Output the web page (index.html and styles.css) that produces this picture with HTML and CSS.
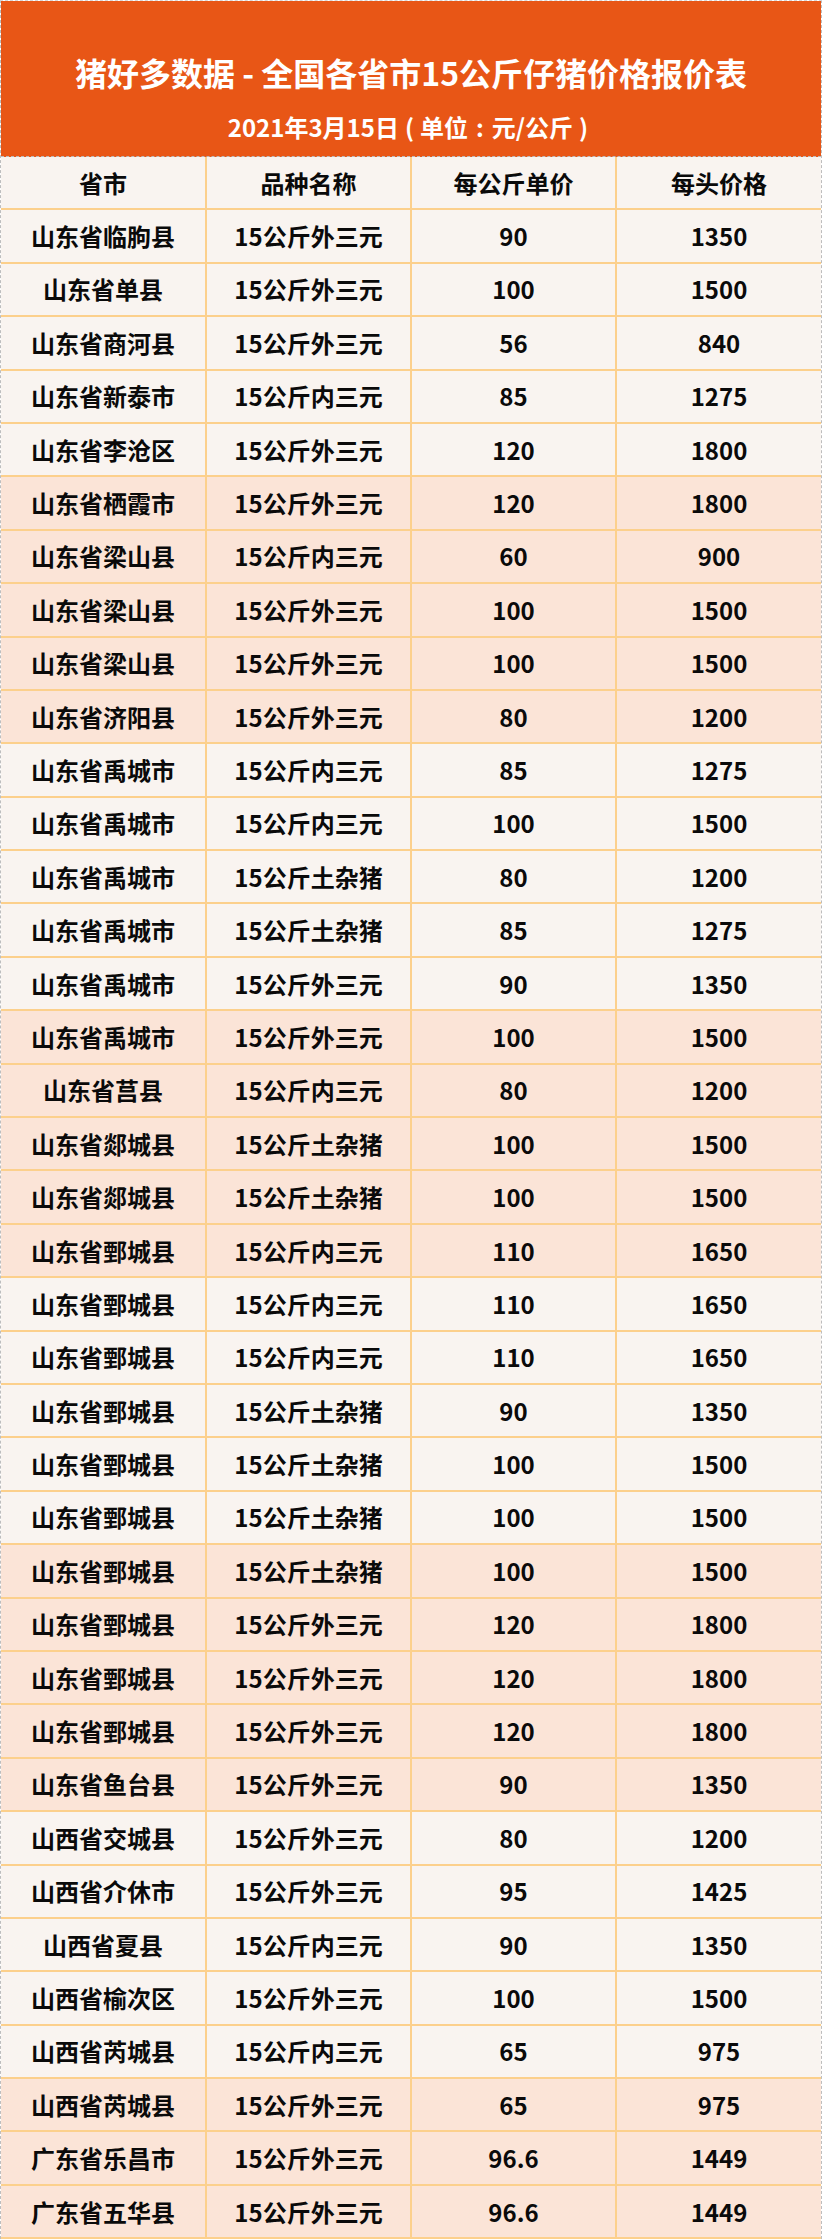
FILE: index.html
```html
<!DOCTYPE html>
<html lang="zh">
<head>
<meta charset="utf-8">
<title>猪好多数据</title>
<link rel="stylesheet" href="styles.css">
</head>
<body>
<div class="sheet">
  <header class="banner">
    <h1 class="title">猪好多数据 - 全国各省市15公斤仔猪价格报价表</h1>
    <p class="subtitle">2021年3月15日<span class="paren">(</span>单位<span class="colon">:</span>元/公斤<span class="paren">)</span></p>
  </header>
  <table class="prices">
    <thead>
      <tr class="light"><th>省市</th><th>品种名称</th><th>每公斤单价</th><th>每头价格</th></tr>
    </thead>
    <tbody>
      <tr class="light"><td>山东省临朐县</td><td>15公斤外三元</td><td>90</td><td>1350</td></tr>
      <tr class="light"><td>山东省单县</td><td>15公斤外三元</td><td>100</td><td>1500</td></tr>
      <tr class="light"><td>山东省商河县</td><td>15公斤外三元</td><td>56</td><td>840</td></tr>
      <tr class="light"><td>山东省新泰市</td><td>15公斤内三元</td><td>85</td><td>1275</td></tr>
      <tr class="light"><td>山东省李沧区</td><td>15公斤外三元</td><td>120</td><td>1800</td></tr>
      <tr class="peach"><td>山东省栖霞市</td><td>15公斤外三元</td><td>120</td><td>1800</td></tr>
      <tr class="peach"><td>山东省梁山县</td><td>15公斤内三元</td><td>60</td><td>900</td></tr>
      <tr class="peach"><td>山东省梁山县</td><td>15公斤外三元</td><td>100</td><td>1500</td></tr>
      <tr class="peach"><td>山东省梁山县</td><td>15公斤外三元</td><td>100</td><td>1500</td></tr>
      <tr class="peach"><td>山东省济阳县</td><td>15公斤外三元</td><td>80</td><td>1200</td></tr>
      <tr class="light"><td>山东省禹城市</td><td>15公斤内三元</td><td>85</td><td>1275</td></tr>
      <tr class="light"><td>山东省禹城市</td><td>15公斤内三元</td><td>100</td><td>1500</td></tr>
      <tr class="light"><td>山东省禹城市</td><td>15公斤土杂猪</td><td>80</td><td>1200</td></tr>
      <tr class="light"><td>山东省禹城市</td><td>15公斤土杂猪</td><td>85</td><td>1275</td></tr>
      <tr class="light"><td>山东省禹城市</td><td>15公斤外三元</td><td>90</td><td>1350</td></tr>
      <tr class="peach"><td>山东省禹城市</td><td>15公斤外三元</td><td>100</td><td>1500</td></tr>
      <tr class="peach"><td>山东省莒县</td><td>15公斤内三元</td><td>80</td><td>1200</td></tr>
      <tr class="peach"><td>山东省郯城县</td><td>15公斤土杂猪</td><td>100</td><td>1500</td></tr>
      <tr class="peach"><td>山东省郯城县</td><td>15公斤土杂猪</td><td>100</td><td>1500</td></tr>
      <tr class="peach"><td>山东省鄄城县</td><td>15公斤内三元</td><td>110</td><td>1650</td></tr>
      <tr class="light"><td>山东省鄄城县</td><td>15公斤内三元</td><td>110</td><td>1650</td></tr>
      <tr class="light"><td>山东省鄄城县</td><td>15公斤内三元</td><td>110</td><td>1650</td></tr>
      <tr class="light"><td>山东省鄄城县</td><td>15公斤土杂猪</td><td>90</td><td>1350</td></tr>
      <tr class="light"><td>山东省鄄城县</td><td>15公斤土杂猪</td><td>100</td><td>1500</td></tr>
      <tr class="light"><td>山东省鄄城县</td><td>15公斤土杂猪</td><td>100</td><td>1500</td></tr>
      <tr class="peach"><td>山东省鄄城县</td><td>15公斤土杂猪</td><td>100</td><td>1500</td></tr>
      <tr class="peach"><td>山东省鄄城县</td><td>15公斤外三元</td><td>120</td><td>1800</td></tr>
      <tr class="peach"><td>山东省鄄城县</td><td>15公斤外三元</td><td>120</td><td>1800</td></tr>
      <tr class="peach"><td>山东省鄄城县</td><td>15公斤外三元</td><td>120</td><td>1800</td></tr>
      <tr class="peach"><td>山东省鱼台县</td><td>15公斤外三元</td><td>90</td><td>1350</td></tr>
      <tr class="light"><td>山西省交城县</td><td>15公斤外三元</td><td>80</td><td>1200</td></tr>
      <tr class="light"><td>山西省介休市</td><td>15公斤外三元</td><td>95</td><td>1425</td></tr>
      <tr class="light"><td>山西省夏县</td><td>15公斤内三元</td><td>90</td><td>1350</td></tr>
      <tr class="light"><td>山西省榆次区</td><td>15公斤外三元</td><td>100</td><td>1500</td></tr>
      <tr class="light"><td>山西省芮城县</td><td>15公斤内三元</td><td>65</td><td>975</td></tr>
      <tr class="peach"><td>山西省芮城县</td><td>15公斤外三元</td><td>65</td><td>975</td></tr>
      <tr class="peach"><td>广东省乐昌市</td><td>15公斤外三元</td><td>96.6</td><td>1449</td></tr>
      <tr class="peach"><td>广东省五华县</td><td>15公斤外三元</td><td>96.6</td><td>1449</td></tr>
    </tbody>
  </table>
</div>
</body>
</html>
```

FILE: styles.css
```css
html, body {
  margin: 0;
  padding: 0;
  background: #ffffff;
}

body {
  font-family: "Noto Sans CJK SC", "Noto Sans", sans-serif;
  color: #0a0a0a;
}

.sheet {
  width: 822px;
  box-sizing: border-box;
  border-left: 1px dashed #bdbdbd;
  border-right: 1px dashed #bdbdbd;
  border-top: 1px dashed #d8d8d8;
}

.banner {
  background: #e85616;
  height: 156px;
  box-sizing: border-box;
  padding-top: 51px;
  text-align: center;
  color: #ffffff;
  border-bottom: 1px dashed #bdbdbd;
}

.title {
  margin: 0;
  font-size: 32px;
  font-weight: 700;
  line-height: 40px;
}

.subtitle {
  margin: 20px 0 0;
  font-size: 24px;
  font-weight: 700;
  line-height: 30px;
}

.paren {
  margin: 0 6px;
}

.colon {
  margin: 0 8px;
}

.prices {
  width: 100%;
  table-layout: fixed;
  border-collapse: collapse;
}

.prices th,
.prices td {
  height: 51.4px;
  padding: 0;
  text-align: center;
  vertical-align: middle;
  font-size: 24px;
  font-weight: 700;
  line-height: 30px;
  border: 2px solid #fcd08c;
}

.prices tr > :first-child {
  border-left: none;
}

.prices tr > :last-child {
  border-right: none;
}

.prices thead th {
  border-top: none;
}

.light {
  background: #f9f4f0;
}

.peach {
  background: #fbe4d7;
}
```
